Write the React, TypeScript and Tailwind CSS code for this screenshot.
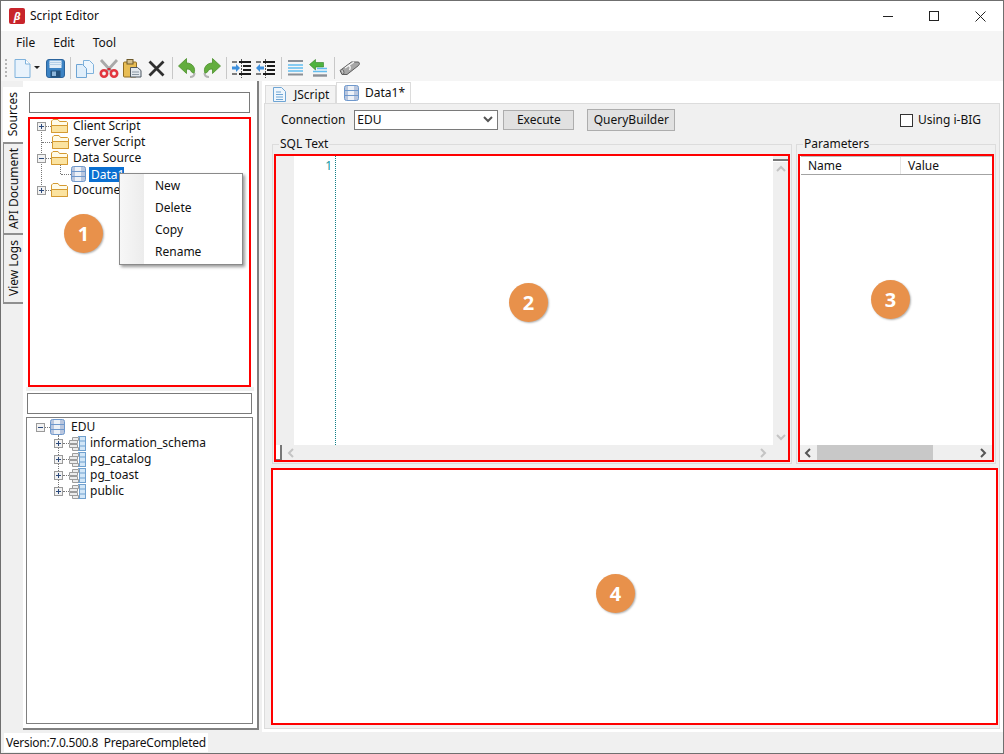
import React from "react";

function Sep() {
  return <div className="w-px h-[22px] bg-[#c8c8c8] shrink-0" />;
}

function NewDoc() {
  return (
    <svg width="17" height="19" viewBox="0 0 17 19">
      <path d="M1 .5h10.500l4.500 4.500v13.500H1z" fill="#e9f3fc" stroke="#7fb2dc" />
      <path d="M11.500.5v4.500h4.500" fill="#fff" stroke="#7fb2dc" />
    </svg>
  );
}

function Save() {
  return (
    <svg width="19" height="19" viewBox="0 0 19 19">
      <rect x=".5" y=".5" width="18" height="18" rx="2.500" fill="#3c83c4" stroke="#2a639c" />
      <rect x="3.500" y="1.500" width="12" height="7.500" fill="#e3eef8" />
      <path d="M3.500 3.500h12M3.500 5.500h12" stroke="#b5d0e8" />
      <rect x="4.500" y="11.500" width="10" height="7" fill="#25527d" />
      <rect x="6" y="12.500" width="4" height="4.500" fill="#8fb6da" />
    </svg>
  );
}

function CopyIcon() {
  return (
    <svg width="18" height="19" viewBox="0 0 18 19">
      <path d="M7.500 1.500h6l4 4v9h-10z" fill="#eef6fd" stroke="#7fb2dc" />
      <path d="M.5 5.500h6l4 4v9H.5z" fill="#e0eefa" stroke="#6fa5d4" />
    </svg>
  );
}

function Cut() {
  return (
    <svg width="20" height="19" viewBox="0 0 20 19" fill="none">
      <path d="M2 1l10 11M18 1L8 12" stroke="#a9a9a9" strokeWidth="2.800" />
      <path d="M8.500 10l3 0" stroke="#c9303a" strokeWidth="2" />
      <circle cx="5" cy="14.500" r="3.200" stroke="#e2363f" strokeWidth="2.600" />
      <circle cx="15" cy="14.500" r="3.200" stroke="#e2363f" strokeWidth="2.600" />
    </svg>
  );
}

function Paste() {
  return (
    <svg width="20" height="19" viewBox="0 0 20 19">
      <rect x=".5" y="3" width="13" height="15" rx="1" fill="#e8bd55" stroke="#8f6c22" />
      <rect x="4" y=".5" width="6" height="4.500" fill="#d5c08e" stroke="#6e5a2a" />
      <path d="M7.500 8.500h7l3.500 3v6.500H7.500z" fill="#e2e8ee" stroke="#4c5660" />
      <path d="M9 13h7M9 15.500h7" stroke="#8a97a3" />
    </svg>
  );
}

function Cross() {
  return (
    <svg width="17" height="17" viewBox="0 0 17 17">
      <path d="M1.500 1.500l14 14M15.500 1.500l-14 14" stroke="#2f2f2f" strokeWidth="2.800" />
    </svg>
  );
}

function Undo({ flip }: { flip?: boolean }) {
  return (
    <svg width="20" height="20" viewBox="0 0 20 20" className={flip ? "-scale-x-100" : ""}>
      <path d="M8.500 .5L.5 8 8.500 15.500v-4.500c3 0 4.500 1 5 3l2.500 1.500c2-5-1-10.500-7.500-10.500z" fill="#63ad3e" stroke="#4a8f2a" strokeWidth=".8" />
      <path d="M12 19c2.500 0 4.500-1.500 4.500-4" fill="none" stroke="#b3b3b3" strokeWidth="2" />
    </svg>
  );
}

function Indent({ back }: { back?: boolean }) {
  return (
    <svg width="19" height="19" viewBox="0 0 19 19">
      <path d="M9.500 0v19" stroke="#555" strokeDasharray="2 1" />
      <path d="M7 3h12M11 7h8M11 11h8M7 15h12" stroke="#1c1c1c" strokeWidth="2" />
      <path d="M0 3h5M0 15h5" stroke="#555" strokeWidth="1.500" />
      {back ? (
        <path d="M8 7.500H4V5L0 9l4 4v-2.500h4z" fill="#3d8fdc" />
      ) : (
        <path d="M0 7.500h4V5l4 4-4 4v-2.500H0z" fill="#3d8fdc" />
      )}
    </svg>
  );
}

function Lines() {
  return (
    <svg width="17" height="18" viewBox="0 0 17 18">
      <path d="M1 2h15M1 15.500h15" stroke="#8a8f96" strokeWidth="2" />
      <path d="M1 6h15M1 9h15M1 12h15" stroke="#62bdf0" strokeWidth="1.500" />
    </svg>
  );
}

function LinesBack() {
  return (
    <svg width="19" height="19" viewBox="0 0 19 19">
      <path d="M.5 5.500l6-5v3h8v4.500h-8v3z" fill="#4fb33f" stroke="#2f7f25" strokeWidth=".6" />
      <path d="M8 9.500h10M4 12.500h14" stroke="#62bdf0" strokeWidth="1.500" />
      <path d="M4 16.500h14" stroke="#8a8f96" strokeWidth="2.400" />
    </svg>
  );
}

function Eraser() {
  return (
    <svg width="21" height="17" viewBox="0 0 21 17">
      <path d="M1 10.500L12.500 2H19c1.500 0 2 2 .5 3.500L8 14.500H3z" fill="#a7a7a7" stroke="#5c5c5c" />
      <path d="M2.500 9.500c2 0 3 2 2 5" fill="#e5e5e5" stroke="#5c5c5c" />
      <path d="M9 5.500c2 0 3 2 1.500 4.500M6 8l9-6" fill="none" stroke="#f4f4f4" strokeWidth="1.400" />
    </svg>
  );
}

function Toolbar() {
  return (
    <div className="h-[26px] bg-[#f5f5f5] flex items-center pl-[4px] shrink-0">
      <div className="w-[2px] h-[18px] border-l-2 border-dotted border-[#b5b5b5] mr-[7px]" />
      <NewDoc />
      <svg width="6" height="4" viewBox="0 0 6 4" className="ml-[3px] mr-[6px]"><path d="M0 0h6L3 3z" fill="#222" /></svg>
      <Save />
      <div className="w-[5px]" />
      <Sep />
      <div className="w-[5px]" />
      <CopyIcon />
      <div className="w-[5px]" />
      <Cut />
      <div className="w-[4px]" />
      <Paste />
      <div className="w-[5px]" />
      <Cross />
      <div className="w-[7px]" />
      <Sep />
      <div className="w-[5px]" />
      <Undo />
      <div className="w-[3px]" />
      <Undo flip />
      <div className="w-[5px]" />
      <Sep />
      <div className="w-[5px]" />
      <Indent />
      <div className="w-[5px]" />
      <Indent back />
      <div className="w-[6px]" />
      <Sep />
      <div className="w-[5px]" />
      <Lines />
      <div className="w-[5px]" />
      <LinesBack />
      <div className="w-[6px]" />
      <Sep />
      <div className="w-[4px]" />
      <Eraser />
    </div>
  );
}

function Folder() {
  return (
    <svg width="17" height="16" viewBox="0 0 17 16" className="shrink-0">
      <path d="M.5 14.500V3l1.500-1.500h5L8.500 3.500h7l1 1v10z" fill="#fffbe8" stroke="#d49a32" />
      <path d="M.5 14.500V7.500h16v7z" fill="#fbe3a0" stroke="#d49a32" />
    </svg>
  );
}

function Db({ size = 15 }: { size?: number }) {
  return (
    <svg width={size} height={size + 1} viewBox="0 0 15 16" className="shrink-0">
      <rect x=".5" y=".5" width="14" height="15" rx="2" fill="#b9c6de" stroke="#6f98cc" />
      <rect x="4" y="1" width="6" height="14" fill="#fff" opacity=".75" />
      <path d="M1 5.500h13M1 10.500h13" stroke="#6f98cc" />
    </svg>
  );
}

function Schema() {
  return (
    <svg width="17" height="17" viewBox="0 0 17 17" className="shrink-0">
      <path d="M.5 5.500h8v3h-8zM.5 9.500h8v3h-8zM3.500 2.500h6v3h-6zM3.500 12.500h6v3h-6z" fill="#ececec" stroke="#9c9c9c" />
      <rect x="10.500" y="1.500" width="6" height="14" fill="#d2e6f7" stroke="#6fa0cf" />
      <path d="M9 1.500h8M9 15.500h8M11 6h5M11 11h5" stroke="#6fa0cf" />
    </svg>
  );
}

function Expander({ open }: { open?: boolean }) {
  return (
    <span className="w-[9px] h-[9px] border border-[#9a9a9a] bg-[#f2f2f2] relative shrink-0 flex items-center justify-center">
      <span className="w-[5px] h-px bg-[#2c4a7c]" />
      {!open && <span className="absolute w-px h-[5px] bg-[#2c4a7c]" />}
    </span>
  );
}

function Dots({ w }: { w: number }) {
  return <span className="border-t border-dotted border-[#777] shrink-0" style={{ width: w }} />;
}

function Badge({ n, className }: { n: number; className: string }) {
  return (
    <div className={`absolute w-[39px] h-[39px] rounded-full bg-[#e8914b] text-white text-[20px] font-bold flex items-center justify-center shadow-[1px_1px_2px_rgba(0,0,0,0.3)] ${className}`}>
      {n}
    </div>
  );
}

function SearchBox({ className }: { className: string }) {
  return <div className={`h-[21px] bg-white border border-[#7a7a7a] ${className}`} />;
}

function SourceTree() {
  return (
    <div className="relative ml-[5px] mt-[4px] w-[223px] h-[270px] border-2 border-[#fe0000] bg-white text-[#111]">
      <span className="absolute left-[11px] top-[10px] h-[64px] border-l border-dotted border-[#777]" />
      <span className="absolute left-[30px] top-[43px] h-[12px] border-l border-dotted border-[#777]" />
      <div className="relative -mt-[1px]">
        <div className="h-4 flex items-center pl-[7px]">
          <Expander /><Dots w={5} /><Folder /><span className="ml-[5px]">Client Script</span>
        </div>
        <div className="h-4 flex items-center pl-[12px]">
          <Dots w={10} /><Folder /><span className="ml-[5px]">Server Script</span>
        </div>
        <div className="h-4 flex items-center pl-[7px]">
          <Expander open /><Dots w={5} /><Folder /><span className="ml-[5px]">Data Source</span>
        </div>
        <div className="h-4 flex items-center pl-[31px]">
          <Dots w={10} /><Db />
          <span className="ml-[3px] bg-[#0a6fd1] text-white px-[2px] w-[35px] h-[15px] leading-[15px] overflow-hidden">Data1</span>
        </div>
        <div className="h-4 flex items-center pl-[7px]">
          <Expander /><Dots w={5} /><Folder /><span className="ml-[5px]">Document</span>
        </div>
      </div>
      <Badge n={1} className="left-[34px] top-[95px]" />
      <div className="absolute left-[89px] top-[54px] w-[124px] h-[92px] bg-white border border-[#8a8a8a] shadow-[2px_2px_3px_rgba(0,0,0,0.4)] flex">
        <div className="w-[24px] bg-gradient-to-r from-[#f7f7f7] to-[#ececec]" />
        <div className="pl-[11px] pt-[1px]">
          {["New", "Delete", "Copy", "Rename"].map((item) => (
            <div key={item} className="h-[22px] leading-[22px]">{item}</div>
          ))}
        </div>
      </div>
    </div>
  );
}

function DbTree() {
  return (
    <div className="relative ml-[3px] mt-[3px] w-[227px] h-[307px] border border-[#7f7f7f] bg-white text-[#111]">
      <span className="absolute left-[31px] top-[17px] h-[56px] border-l border-dotted border-[#777]" />
      <div className="h-4 flex items-center pl-[9px] mt-[1px]">
        <Expander open /><Dots w={5} /><Db /><span className="ml-[6px]">EDU</span>
      </div>
      {["information_schema", "pg_catalog", "pg_toast", "public"].map((name) => (
        <div key={name} className="h-4 flex items-center pl-[27px]">
          <Expander /><Dots w={6} /><Schema /><span className="ml-[4px]">{name}</span>
        </div>
      ))}
    </div>
  );
}

function VTab({ label, active, h }: { label: string; active?: boolean; h: number }) {
  return (
    <div
      style={{ height: h }}
      className={`flex items-center justify-center border-b-2 border-[#8f8f8f] ${active ? "bg-white" : "bg-[#f0f0f0] border-l"}`}
    >
      <span className="[writing-mode:vertical-rl] rotate-180 whitespace-nowrap">{label}</span>
    </div>
  );
}

function Chevron({ dir, dark }: { dir: "l" | "r" | "u" | "d"; dark?: boolean }) {
  const d = { l: "M6 1L2 5l4 4", r: "M2 1l4 4-4 4", u: "M1 6l4-4 4 4", d: "M1 2l4 4 4-4" }[dir];
  return (
    <svg width="10" height="10" viewBox="0 0 10 10" className="shrink-0">
      <path d={d} fill="none" stroke={dark ? "#555" : "#c4c4c4"} strokeWidth="2" />
    </svg>
  );
}

function SqlPanel() {
  return (
    <fieldset className="w-[520px] h-[327px] border border-[#dcdcdc] px-[1px] min-w-0">
      <legend className="ml-[5px] px-[1px] leading-[14px]">SQL Text</legend>
      <div className="relative mt-[3px] h-[308px] border-2 border-[#fe0000] bg-white flex flex-col">
        <div className="flex flex-1 min-h-0">
          <div className="w-[18px] bg-[#efefef]" />
          <div className="w-[42px] border-r border-dotted border-[#0f7f86] text-right pr-[3px] text-[#0f96a0] pt-[1px]">1</div>
          <div className="flex-1" />
          <div className="w-[15px] bg-[#efefef] flex flex-col items-center pb-[2px]">
            <div className="w-[15px] h-[3px] mt-[3px] border-t-2 border-[#777] bg-white" />
            <div className="mt-[3px]"><Chevron dir="u" /></div>
            <div className="flex-1" />
            <Chevron dir="d" />
          </div>
        </div>
        <div className="h-[15px] bg-[#efefef] flex items-center pr-[19px]">
          <div className="w-[6px] h-[15px] bg-white border-r-2 border-b border-[#777] mr-[5px]" />
          <Chevron dir="l" />
          <div className="flex-1" />
          <Chevron dir="r" />
        </div>
        <Badge n={2} className="left-[233px] top-[127px]" />
      </div>
    </fieldset>
  );
}

function ParamPanel() {
  return (
    <fieldset className="w-[200px] h-[327px] border border-[#dcdcdc] px-[1px] min-w-0">
      <legend className="ml-[5px] px-[1px] leading-[14px]">Parameters</legend>
      <div className="relative mt-[3px] h-[308px] border-2 border-[#fe0000] bg-white flex flex-col">
        <div className="h-[19px] flex border-b-[1px] border-[#a3a3a3] border-t border-t-[#bdbdbd] ml-px">
          <div className="w-[100px] border-r border-[#e4e4e4] pl-[7px] leading-[17px]">Name</div>
          <div className="pl-[7px] leading-[17px]">Value</div>
        </div>
        <div className="flex-1" />
        <div className="h-[15px] bg-[#efefef] flex items-center">
          <div className="w-[17px] flex justify-center"><Chevron dir="l" dark /></div>
          <div className="w-[116px] h-[15px] bg-[#c8c8c8]" />
          <div className="flex-1" />
          <div className="w-[17px] flex justify-center"><Chevron dir="r" dark /></div>
        </div>
        <Badge n={3} className="left-[71px] top-[124px]" />
      </div>
    </fieldset>
  );
}

export default function App() {
  return (
    <div className="w-[1004px] h-[754px] border border-[#6f6f6f] bg-white flex flex-col overflow-hidden text-[12px] text-[#111] font-['Noto_Sans','Liberation_Sans',sans-serif]">
      <div className="h-[30px] flex items-center pl-[8px] shrink-0">
        <div className="w-4 h-4 rounded-[2px] bg-[#c8242b] text-white text-[11px] font-bold italic flex items-center justify-center">β</div>
        <span className="ml-[5px]">Script Editor</span>
        <div className="flex-1" />
        <svg width="10" height="10" viewBox="0 0 10 10"><path d="M0 5.500h10" stroke="#222" /></svg>
        <svg width="10" height="10" viewBox="0 0 10 10" className="ml-[36px]"><rect x=".5" y=".5" width="9" height="9" fill="none" stroke="#222" /></svg>
        <svg width="11" height="11" viewBox="0 0 11 11" className="ml-[36px] mr-[17px]"><path d="M.5.5l10 10M10.500.5l-10 10" stroke="#222" /></svg>
      </div>
      <div className="h-[24px] bg-[#f5f5f5] flex items-center pl-[15px] gap-[18px] shrink-0">
        <span>File</span>
        <span>Edit</span>
        <span>Tool</span>
      </div>
      <Toolbar />

      <div className="flex-1 min-h-0 flex bg-[#f0f0f0]">
        <div className="w-[22px] pl-[2px] pt-[6px] shrink-0">
          <VTab label="Sources" active h={57} />
          <VTab label="API Document" h={91} />
          <VTab label="View Logs" h={69} />
        </div>

        <div className="w-[236px] h-[649px] bg-white border-r-2 border-b-2 border-[#808080] shrink-0 flex flex-col">
          <div className="mt-[11px] ml-[6px]"><SearchBox className="w-[221px]" /></div>
          <SourceTree />
          <div className="h-[4px] bg-[#f0f0f0] mx-[3px]" />
          <div className="ml-[4px] mt-[2px]"><SearchBox className="w-[225px]" /></div>
          <DbTree />
        </div>

        <div className="flex-1 min-w-0 pl-[2px] pr-[2px] flex flex-col bg-white pt-[2px] ml-[3px]">
          <div className="flex h-[20px] items-end pl-[1px]">
            <div className="h-[18px] w-[71px] bg-[#f3f3f3] border border-[#dcdcdc] border-b-0 flex items-center pl-[7px] gap-[8px]">
              <svg width="13" height="15" viewBox="0 0 13 15"><path d="M.5.500h8l4 4v10H.5z" fill="#eef6fd" stroke="#6fa5d4" /><path d="M3 5h5M3 7.500h7M3 10h7M3 12.500h7" stroke="#6fa5d4" /></svg>
              <span>JScript</span>
            </div>
            <div className="h-[21px] w-[75px] bg-white border border-[#dcdcdc] border-b-0 flex items-center pl-[7px] gap-[6px]">
              <Db size={15} />
              <span>Data1*</span>
            </div>
          </div>
          <div className="w-[736px] h-[626px] bg-[#f0f0f0] border border-[#dcdcdc] pl-[7px] flex flex-col">
            <div className="h-[32px] flex items-center pl-[9px]">
              <span>Connection</span>
              <div className="ml-[9px] w-[144px] h-[20px] bg-white border border-[#7a7a7a] flex items-center justify-between pl-[2px] pr-[4px]">
                <span>EDU</span>
                <Chevron dir="d" dark />
              </div>
              <div className="ml-[5px] w-[71px] h-[20px] bg-[#e1e1e1] border border-[#adadad] flex items-center justify-center">Execute</div>
              <div className="ml-[13px] w-[88px] h-[22px] bg-[#e1e1e1] border border-[#adadad] flex items-center justify-center">QueryBuilder</div>
              <div className="flex-1" />
              <div className="w-[13px] h-[13px] bg-white border border-[#333]" />
              <span className="ml-[5px] mr-[18px]">Using i-BIG</span>
            </div>
            <div className="flex gap-[4px] mt-[1px]">
              <SqlPanel />
              <ParamPanel />
            </div>
            <div className="relative mt-[4px] -ml-px w-[727px] h-[257px] border-2 border-[#fe0000] bg-white">
              <Badge n={4} className="left-[323px] top-[104px]" />
            </div>
          </div>
        </div>
      </div>

      <div className="h-[21px] bg-[#f0f0f0] shrink-0 flex items-center pl-[3px]">
        <div className="bg-white h-[19px] leading-[19px] px-[2px] whitespace-pre tracking-[-0.25px]">Version:7.0.500.8  PrepareCompleted</div>
      </div>
    </div>
  );
}
